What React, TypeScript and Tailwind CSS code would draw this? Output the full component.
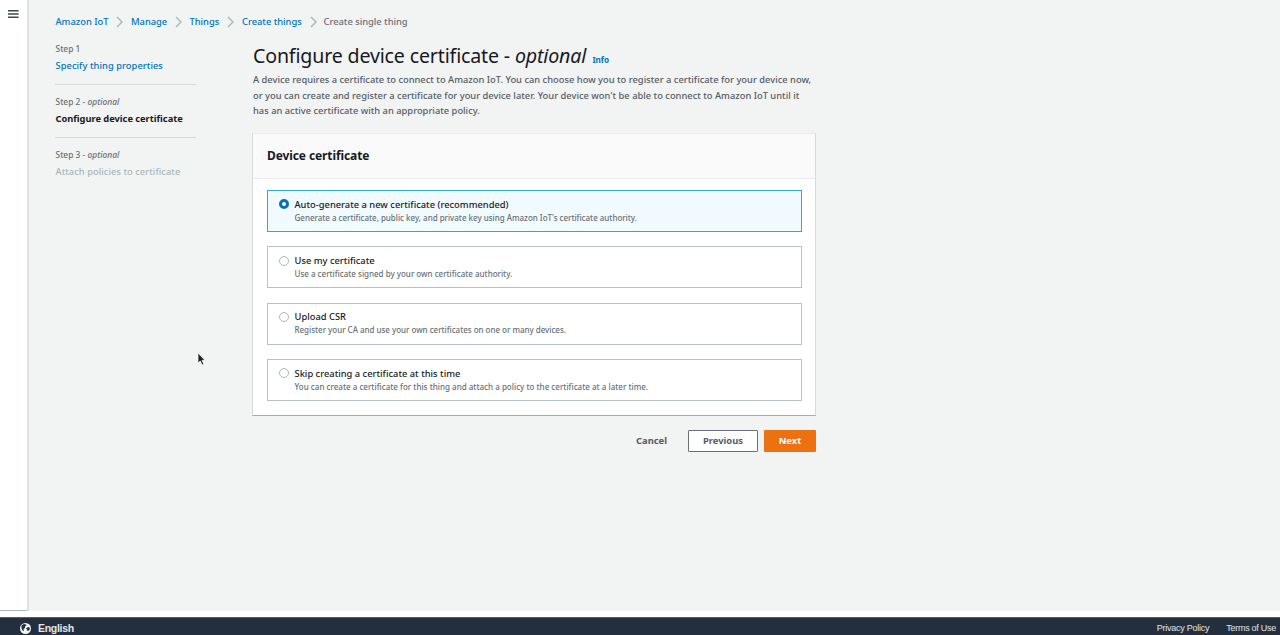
import React from "react";

const crumbs = [
  { label: "Amazon IoT", width: "w-[53px]" },
  { label: "Manage", width: "w-[36px]" },
  { label: "Things", width: "w-[30px]" },
  { label: "Create things", width: "w-[60px]" },
];

const options = [
  {
    title: "Auto-generate a new certificate (recommended)",
    text: "Generate a certificate, public key, and private key using Amazon IoT's certificate authority.",
    tracking: "tracking-[-0.015px]",
  },
  {
    title: "Use my certificate",
    text: "Use a certificate signed by your own certificate authority.",
    tracking: "tracking-[0px]",
  },
  {
    title: "Upload CSR",
    text: "Register your CA and use your own certificates on one or many devices.",
    tracking: "tracking-[-0.02px]",
  },
  {
    title: "Skip creating a certificate at this time",
    text: "You can create a certificate for this thing and attach a policy to the certificate at a later time.",
    tracking: "tracking-[0.02px]",
  },
];

function Chevron() {
  return (
    <svg className="mr-[8px] ml-[7.5px] h-3 w-[7px] shrink-0" viewBox="0 0 7 12" fill="none" stroke="#aab7b8" strokeWidth="1.4">
      <path d="M1 1l5 5-5 5" />
    </svg>
  );
}

function Breadcrumbs() {
  return (
    <nav className="flex h-4 items-center pl-[0.5px] text-[9.4px] leading-4 font-medium tracking-[-0.03px] whitespace-nowrap">
      {crumbs.map((c) => (
        <React.Fragment key={c.label}>
          <a className={`${c.width} shrink-0 text-[#0073bb]`}>{c.label}</a>
          <Chevron />
        </React.Fragment>
      ))}
      <span className="-ml-px text-[#687078]">Create single thing</span>
    </nav>
  );
}

function StepLabel({ n, optional }: { n: number; optional?: boolean }) {
  return (
    <div className="text-[8.4px] leading-[14px] font-medium tracking-[0.02px] text-[#687078]">
      Step {n}
      {optional && <> - <i>optional</i></>}
    </div>
  );
}

function Steps() {
  return (
    <ol className="w-[141px] shrink-0 whitespace-nowrap">
      <li className="h-[43px] border-b border-[#d5dbdb] pl-[0.5px]">
        <StepLabel n={1} />
        <div className="mt-[2px] text-[9.3px] leading-4 font-medium tracking-[0.06px] text-[#0073bb]">Specify thing properties</div>
      </li>
      <li className="h-[53px] border-b border-[#d5dbdb] pt-[10px] pl-[0.5px]">
        <StepLabel n={2} optional />
        <div className="mt-[2px] text-[9.3px] leading-4 font-bold tracking-[-0.02px] text-[#16191f]">Configure device certificate</div>
      </li>
      <li className="pt-[10px] pl-[0.5px]">
        <StepLabel n={3} optional />
        <div className="mt-[2px] text-[9.3px] leading-4 font-medium tracking-[0.05px] text-[#aab7b8]">Attach policies to certificate</div>
      </li>
    </ol>
  );
}

export default function App() {
  const [selected, setSelected] = React.useState(0);
  return (
    <div className="relative flex h-[635px] w-[1280px] flex-col overflow-hidden bg-white font-['Noto_Sans',sans-serif] text-[#16191f]">
      <div className="flex h-[611px] shrink-0">
        <aside className="flex w-[27px] shrink-0 border-b border-[#aab7b8] pt-[9px] pl-[8px]">
          <svg className="h-[10px] w-[11px]" viewBox="0 0 11 10" fill="#414750">
            <path d="M0 1h10.6v1.4H0zM0 4.3h10.6v1.4H0zM0 7.6h10.6v1.4H0z" />
          </svg>
        </aside>
        <main className="grow border-l-2 border-[#e0e3e3] bg-[#f2f3f3] pt-[14px] pl-[26px]">
          <Breadcrumbs />
          <div className="mt-[12px] flex gap-[56px]">
            <Steps />
            <section className="w-[564px] shrink-0">
              <header className="pl-px whitespace-nowrap">
                <h1 className="flex h-[30px] items-baseline text-[19.6px] leading-[28px] tracking-[-0.16px]">
                  <span className="w-[339.5px] shrink-0">Configure device certificate - <i>optional</i></span>
                  <a className="text-[8.2px] font-bold tracking-[-0.1px] text-[#0073bb]">Info</a>
                </h1>
                <p className="text-[9.3px] leading-[15.6px] font-medium tracking-[0.02px] text-[#545b64]">
                  A device requires a certificate to connect to Amazon IoT. You can choose how you to register a certificate for your device now,
                  <br />
                  or you can create and register a certificate for your device later. Your device won't be able to connect to Amazon IoT until it
                  <br />
                  has an active certificate with an appropriate policy.
                </p>
              </header>
              <div className="mt-[14px] h-[283px] border border-t-[#eaeded] border-r-[#d5dbdb] border-b-[#a3adae] border-l-[#d5dbdb] bg-white">
                <div className="flex h-[45px] items-center border-b border-[#eaeded] bg-[#fafafa] pl-[14px]">
                  <h2 className="text-[12px] font-bold tracking-[-0.1px]">Device certificate</h2>
                </div>
                <div className="flex flex-col gap-[14.4px] pt-[11px] pr-[13px] pl-[14px]">
                  {options.map((o, i) => (
                    <button
                      key={o.title}
                      onClick={() => setSelected(i)}
                      className={`flex h-[42px] gap-[5.5px] border pt-[6.4px] pl-[11px] text-left whitespace-nowrap ${selected === i ? "border-[#2eabcf] bg-[#f1faff]" : "border-[#b7c2c3] bg-white"}`}
                    >
                      <span className={`mt-[2px] size-[10px] shrink-0 rounded-full ${selected === i ? "border-[3px] border-[#0073bb] bg-white" : "border border-[#aab7b8]"}`} />
                      <span className="pt-[0.4px]">
                        <span className="block text-[9.3px] leading-[14px] font-medium tracking-[0.02px]">{o.title}</span>
                        <span className={`block text-[8px] leading-[12.8px] font-medium text-[#687078] ${o.tracking}`}>{o.text}</span>
                      </span>
                    </button>
                  ))}
                </div>
              </div>
              <div className="mt-[14px] flex h-[22px] justify-end gap-[6px] text-[9.4px] font-bold text-[#545b64]">
                <button className="mr-[15px] pt-px">Cancel</button>
                <button className="w-[70px] rounded-[1px] border border-[#687078] bg-white pt-px">Previous</button>
                <button className="w-[52px] rounded-[1px] bg-[#ec7211] pt-px text-white">Next</button>
              </div>
            </section>
          </div>
        </main>
      </div>
      <footer className="mt-[6px] flex h-[18px] shrink-0 items-center border-t border-[#555e69] bg-[#232f3e] pt-[4px] pr-1 pl-5 font-['Liberation_Sans',sans-serif] text-[9px] text-[#e3e5e7]">
        <svg className="size-[11px]" viewBox="0 0 22 22">
          <circle cx="11" cy="11" r="11" fill="#f4f4f4" />
          <path d="M4 4l4-2 4 1 1 2-3 2v3l-3 2 1 3-2 1-3-5V6zM14 9l4-1 2 3-2 4-3 1-1-3-2-2z" fill="#232f3e" />
        </svg>
        <span className="ml-[7px] text-[10.5px] font-bold tracking-[-0.3px]">English</span>
        <span className="mr-[17px] ml-auto tracking-[-0.25px]">Privacy Policy</span>
        <span className="tracking-[-0.27px]">Terms of Use</span>
      </footer>
      <svg className="absolute top-[352px] left-[197px] h-[14px] w-[9px]" viewBox="0 0 9 14">
        <path d="M1 1v10l2.3-2 1.8 4 1.7-.8L5 8.3h3z" fill="#222" stroke="#fff" strokeWidth=".7" />
      </svg>
    </div>
  );
}
